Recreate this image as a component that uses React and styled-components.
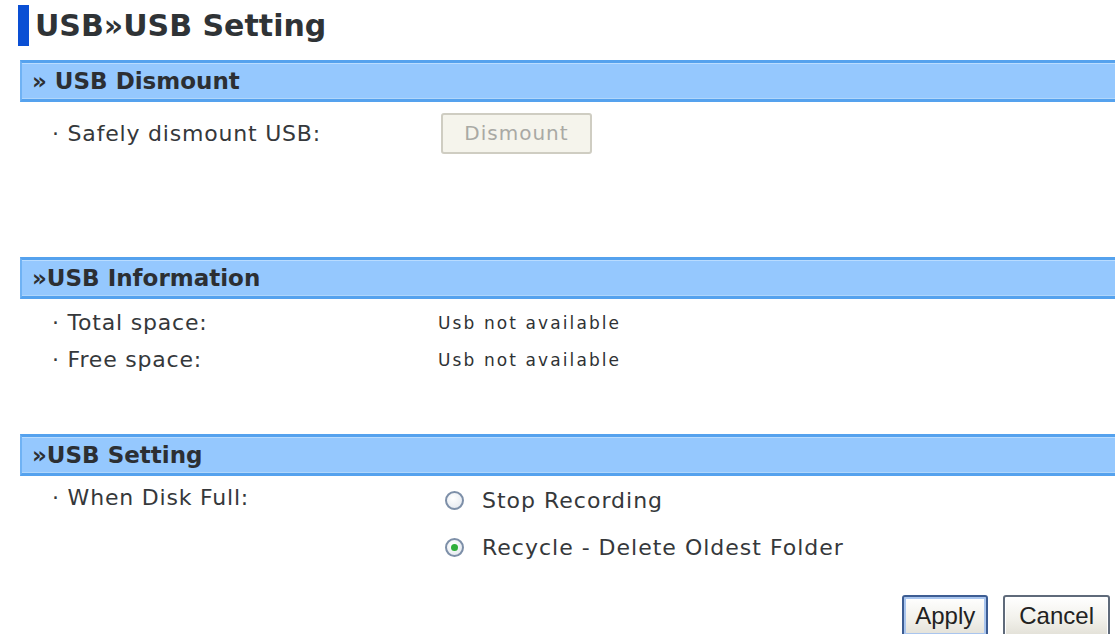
import React from "react";
import styled, { createGlobalStyle } from "styled-components";

const Global = createGlobalStyle`
  html, body {
    margin: 0;
    padding: 0;
    background: #ffffff;
    overflow: hidden;
  }
  body {
    font-family: "DejaVu Sans", Verdana, sans-serif;
    color: #333333;
  }
`;

const Page = styled.div`
  width: 1115px;
  height: 634px;
  padding: 5px 0 0 18px;
  box-sizing: border-box;
  display: flex;
  flex-direction: column;
`;

const TitleRow = styled.div`
  display: flex;
  align-items: stretch;
  gap: 6px;
  height: 41px;
`;

const TitleMark = styled.div`
  width: 11px;
  background: #0a4fd4;
`;

const TitleText = styled.h1`
  margin: 0;
  font-size: 30px;
  font-weight: bold;
  color: #2f3336;
  line-height: 41px;
`;

const Section = styled.section`
  display: flex;
  flex-direction: column;
  margin-top: ${(p) => p.$top}px;
`;

const SectionBar = styled.div`
  margin-left: 2px;
  height: 42px;
  box-sizing: border-box;
  background: #95c8fe;
  border-top: 3px solid #55a2ee;
  border-bottom: 3px solid #55a2ee;
  border-left: 2px solid #6fb2f4;
  box-shadow: inset 0 1px 0 #b9dcff, inset 0 -1px 0 #b0d6fb;
  display: flex;
  align-items: center;
  padding-left: 10px;
  font-size: 23px;
  font-weight: bold;
  color: #2c2f33;
`;

const Rows = styled.div`
  display: flex;
  flex-direction: column;
  padding-top: ${(p) => p.$pad}px;
`;

const Row = styled.div`
  display: grid;
  grid-template-columns: 420px 1fr;
  align-items: ${(p) => (p.$top ? "start" : "center")};
  min-height: ${(p) => p.$h || 0}px;
`;

const Label = styled.div`
  padding-left: 34px;
  padding-top: ${(p) => p.$pt || 0}px;
  font-size: 22px;
  letter-spacing: 0.8px;
  color: #35383b;
  white-space: nowrap;
`;

const Value = styled.div`
  font-size: 17px;
  letter-spacing: 2.1px;
  color: #2f3234;
  white-space: nowrap;
`;

const DisabledButton = styled.button`
  width: 151px;
  height: 41px;
  box-sizing: border-box;
  margin-left: 3px;
  background: #f5f4ec;
  border: 2px solid #cfcdc2;
  border-radius: 3px;
  font-family: "DejaVu Sans", Verdana, sans-serif;
  font-size: 20px;
  letter-spacing: 1px;
  color: #a9a9a4;
  padding: 0;
`;

const RadioList = styled.div`
  display: flex;
  flex-direction: column;
  gap: 10px;
  padding-left: 7px;
`;

const RadioRow = styled.label`
  display: flex;
  align-items: center;
  gap: 18px;
  height: 37px;
  font-size: 22px;
  letter-spacing: 1px;
  color: #35383b;
`;

const RadioDot = styled.span`
  width: 19px;
  height: 19px;
  box-sizing: border-box;
  border-radius: 50%;
  border: 2px solid #7d8fa8;
  background: radial-gradient(circle at 40% 35%, #ffffff 0%, #e9edf2 70%, #d3d9e0 100%);
  display: flex;
  align-items: center;
  justify-content: center;
  &::after {
    content: "";
    width: 7px;
    height: 7px;
    border-radius: 50%;
    background: ${(p) => (p.$checked ? "#2fae3a" : "transparent")};
  }
`;

const Actions = styled.div`
  display: flex;
  justify-content: flex-end;
  gap: 15px;
  padding-right: 5px;
  margin-top: ${(p) => p.$top}px;
`;

const ActionButton = styled.button`
  height: 42px;
  box-sizing: border-box;
  padding: 0 ${(p) => p.$px}px;
  font-family: "Liberation Sans", Arial, sans-serif;
  font-size: 24px;
  color: #222222;
  background: linear-gradient(#ffffff, #f1f0ea 60%, #e3e1d8);
  border: 2px solid ${(p) => (p.$primary ? "#3d5d93" : "#5f6a7a")};
  box-shadow: ${(p) => (p.$primary ? "inset 0 0 0 2px #a9c5ee" : "inset 0 0 0 1px #ffffff")};
  border-radius: 3px;
`;

export default function App() {
  return (
    <>
      <Global />
      <Page>
        <TitleRow>
          <TitleMark />
          <TitleText>USB»USB Setting</TitleText>
        </TitleRow>

        <Section $top={14}>
          <SectionBar>» USB Dismount</SectionBar>
          <Rows $pad={10}>
            <Row $h={42}>
              <Label>· Safely dismount USB:</Label>
              <div>
                <DisabledButton disabled>Dismount</DisabledButton>
              </div>
            </Row>
          </Rows>
        </Section>

        <Section $top={103}>
          <SectionBar>»USB Information</SectionBar>
          <Rows $pad={5}>
            <Row $h={37}>
              <Label>· Total space:</Label>
              <Value>Usb not available</Value>
            </Row>
            <Row $h={37}>
              <Label>· Free space:</Label>
              <Value>Usb not available</Value>
            </Row>
          </Rows>
        </Section>

        <Section $top={56}>
          <SectionBar>»USB Setting</SectionBar>
          <Rows $pad={6}>
            <Row $top>
              <Label $pt={3}>· When Disk Full:</Label>
              <RadioList>
                <RadioRow>
                  <RadioDot />
                  Stop Recording
                </RadioRow>
                <RadioRow>
                  <RadioDot $checked />
                  Recycle - Delete Oldest Folder
                </RadioRow>
              </RadioList>
            </Row>
          </Rows>
        </Section>

        <Actions $top={29}>
          <ActionButton $primary $px={11}>Apply</ActionButton>
          <ActionButton $px={14}>Cancel</ActionButton>
        </Actions>
      </Page>
    </>
  );
}
